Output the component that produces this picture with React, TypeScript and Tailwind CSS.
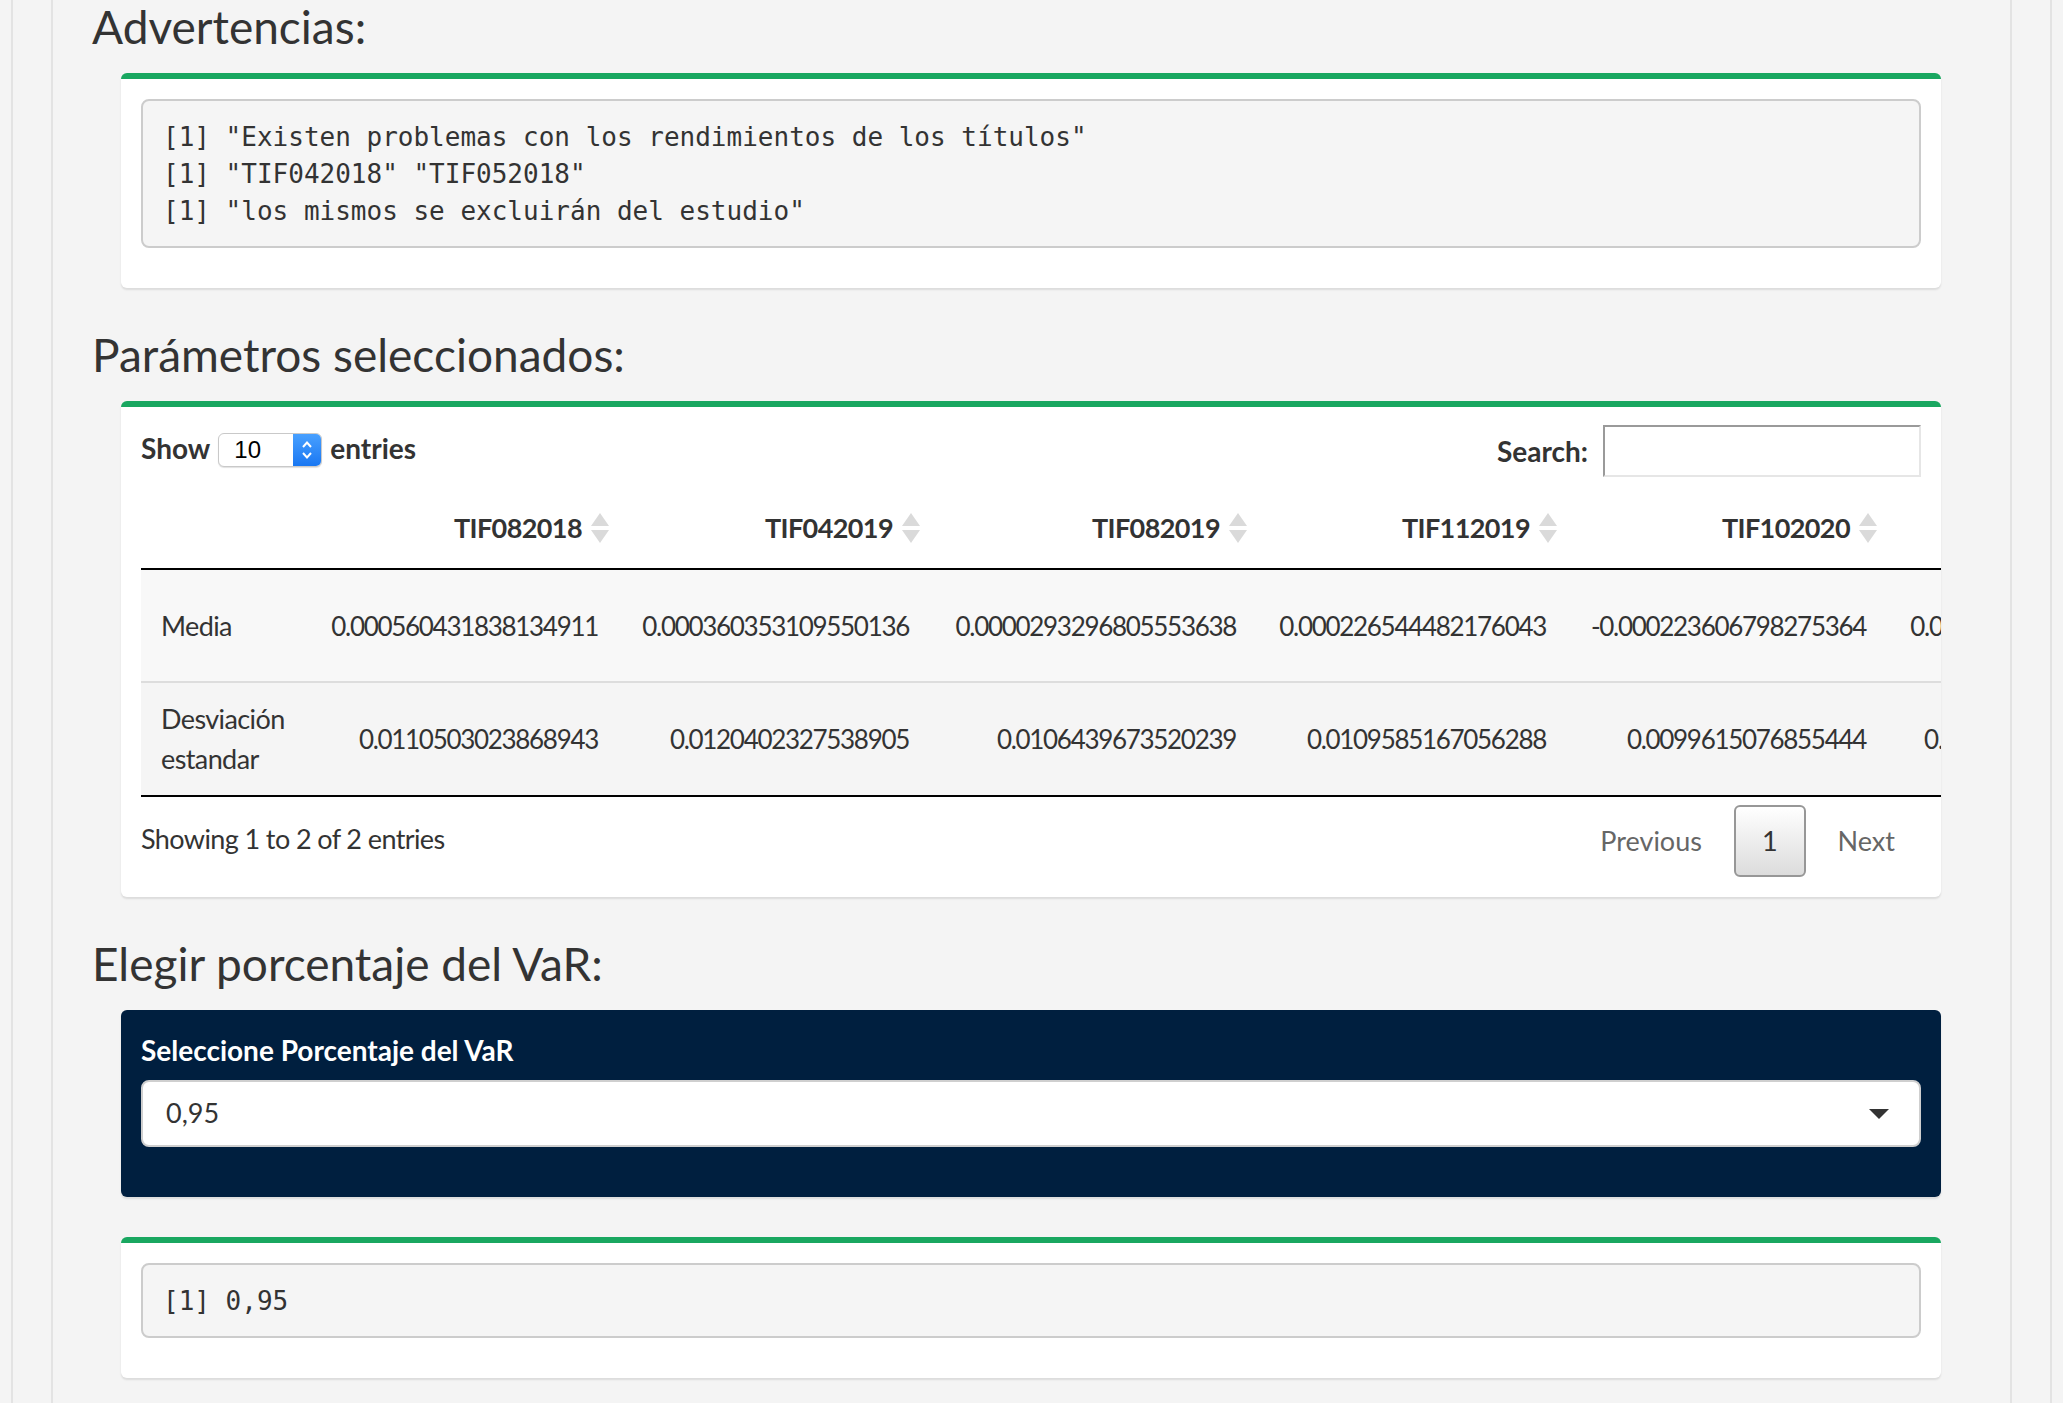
import { ReactNode } from 'react'

const columns = [
  { name: 'TIF082018', w: 311, media: '0.000560431838134911', sd: '0.0110503023868943' },
  { name: 'TIF042019', w: 311, media: '0.000360353109550136', sd: '0.0120402327538905' },
  { name: 'TIF082019', w: 327, media: '0.0000293296805553638', sd: '0.0106439673520239' },
  { name: 'TIF112019', w: 310, media: '0.000226544482176043', sd: '0.0109585167056288' },
  { name: 'TIF102020', w: 320, media: '-0.000223606798275364', sd: '0.0099615076855444' },
  { name: 'TIF032021', w: 311, media: '0.000418276530918442', sd: '0.01028473956182745' },
]

const warnings = [
  '[1] "Existen problemas con los rendimientos de los títulos"',
  '[1] "TIF042018" "TIF052018"',
  '[1] "los mismos se excluirán del estudio"',
]

function SortIcon() {
  return (
    <svg width="18" height="30" viewBox="0 0 18 30" className="shrink-0">
      <path d="M9 0 L18 13 L0 13 Z" fill="#dadada" />
      <path d="M0 17 L18 17 L9 30 Z" fill="#dadada" />
    </svg>
  )
}

function Box({ children }: { children: ReactNode }) {
  return (
    <div className="ml-[29px] mr-[30px] mb-[40px] rounded-[6px] border-t-[6px] border-[#19a760] bg-white p-[20px] shadow-[0_2px_2px_rgba(0,0,0,0.1)]">
      {children}
    </div>
  )
}

function Output({ lines }: { lines: string[] }) {
  return (
    <pre className="mb-[20px] rounded-[8px] border-2 border-[#cccccc] bg-[#f5f5f5] px-[20px] pt-[18px] pb-[16px] font-['DejaVu_Sans_Mono',monospace] text-[26px] leading-[37px] text-[#333]">
      {lines.join('\n')}
    </pre>
  )
}

function Heading({ children }: { children: ReactNode }) {
  return <h3 className="mb-[20px] text-[46px] leading-[53px] font-normal text-[#333]">{children}</h3>
}

export default function App() {
  const tableWidth = 166 + columns.reduce((a, c) => a + c.w, 0)

  return (
    <div className="min-h-screen bg-[#f4f4f4] px-[11px] font-['Lato',sans-serif] text-[#333]">
      <div className="min-h-screen border-x-2 border-[#e3e3e3] px-[38px]">
        <div className="min-h-screen border-x-2 border-[#e3e3e3] pl-[39px] pr-[39px]">
          <Heading>Advertencias:</Heading>
          <Box>
            <Output lines={warnings} />
          </Box>

          <Heading>Parámetros seleccionados:</Heading>
          <Box>
            {/* controles del datatable */}
            <div className="-mt-[2px] flex h-[52px] items-center justify-between text-[28px] font-bold">
              <div className="-mt-[6px] flex items-center">
                <span>Show</span>
                <div className="ml-[8px] mr-[8px] mt-[4px] flex h-[34px] w-[104px] overflow-hidden rounded-[6px] border border-[#c9c9c9] bg-white shadow-[0_1px_1px_rgba(0,0,0,0.12)]">
                  <span className="flex-1 pl-[15px] font-['Liberation_Sans',sans-serif] text-[24px] font-normal leading-[32px] text-black">10</span>
                  <span className="flex w-[28px] items-center justify-center bg-gradient-to-b from-[#48a0ff] to-[#1877f2]">
                    <svg width="12" height="22" viewBox="0 0 12 22">
                      <path d="M2 8 L6 3.5 L10 8" stroke="white" strokeWidth="2" fill="none" />
                      <path d="M2 14 L6 18.5 L10 14" stroke="white" strokeWidth="2" fill="none" />
                    </svg>
                  </span>
                </div>
                <span>entries</span>
              </div>
              <div className="flex items-center">
                <span className="mr-[15px]">Search:</span>
                <input
                  className="h-[52px] w-[318px] border-2 border-t-[#9a9a9a] border-l-[#9a9a9a] border-r-[#e6e6e6] border-b-[#e6e6e6] bg-white outline-none"
                />
              </div>
            </div>

            <div className="-mr-[20px] overflow-hidden">
              <table className="table-fixed border-collapse text-[27px] leading-[40px] tracking-[-0.6px]" style={{ width: tableWidth }}>
                <colgroup>
                  <col style={{ width: 166 }} />
                  {columns.map(c => <col key={c.name} style={{ width: c.w }} />)}
                </colgroup>
                <thead>
                  <tr className="h-[92px] border-b-2 border-black">
                    <th />
                    {columns.map(c => (
                      <th key={c.name} className="align-bottom pb-[20px] font-bold">
                        <div className="flex items-center justify-end gap-[9px] pr-[9px]">
                          <span>{c.name}</span>
                          <SortIcon />
                        </div>
                      </th>
                    ))}
                  </tr>
                </thead>
                <tbody>
                  <tr className="h-[113px] bg-[#f8f8f8]">
                    <td className="px-[20px] align-middle">Media</td>
                    {columns.map(c => (
                      <td key={c.name} className="whitespace-nowrap px-[20px] text-right align-middle text-[26px] tracking-[-1.3px]">{c.media}</td>
                    ))}
                  </tr>
                  <tr className="h-[114px] border-t-2 border-b-2 border-t-[#dddddd] border-b-black bg-[#f5f5f5]">
                    <td className="px-[20px] align-middle">Desviación estandar</td>
                    {columns.map(c => (
                      <td key={c.name} className="whitespace-nowrap px-[20px] text-right align-middle text-[26px] tracking-[-1.3px]">{c.sd}</td>
                    ))}
                  </tr>
                </tbody>
              </table>
            </div>

            <div className="flex items-start justify-between text-[27px] leading-[40px]">
              <div className="pt-[22px] tracking-[-0.6px]">Showing 1 to 2 of 2 entries</div>
              <div className="mt-[8px] flex items-center text-[#666]">
                <span className="px-[28px] py-[16px]">Previous</span>
                <span className="mx-[4px] rounded-[6px] border-2 border-[#979797] bg-gradient-to-b from-white to-[#dcdcdc] px-[26px] py-[14px] text-[#333]">1</span>
                <span className="pl-[28px] pr-[26px] py-[16px]">Next</span>
              </div>
            </div>
          </Box>

          <Heading>Elegir porcentaje del VaR:</Heading>
          <div className="ml-[29px] mr-[30px] mb-[40px] rounded-[6px] bg-[#001f3f] px-[20px] pt-[20px] pb-[50px] shadow-[0_2px_2px_rgba(0,0,0,0.1)]">
            <label className="mb-[10px] block text-[28px] font-bold leading-[40px] text-white">Seleccione Porcentaje del VaR</label>
            <div className="flex h-[67px] items-center justify-between rounded-[8px] border-2 border-[#cfcfcf] bg-white pl-[23px] pr-[30px] text-[27px] text-[#333]">
              <span>0,95</span>
              <svg width="20" height="10" viewBox="0 0 20 10">
                <path d="M0 0 L20 0 L10 10 Z" fill="#333" />
              </svg>
            </div>
          </div>

          <Box>
            <Output lines={['[1] 0,95']} />
          </Box>
        </div>
      </div>
    </div>
  )
}
